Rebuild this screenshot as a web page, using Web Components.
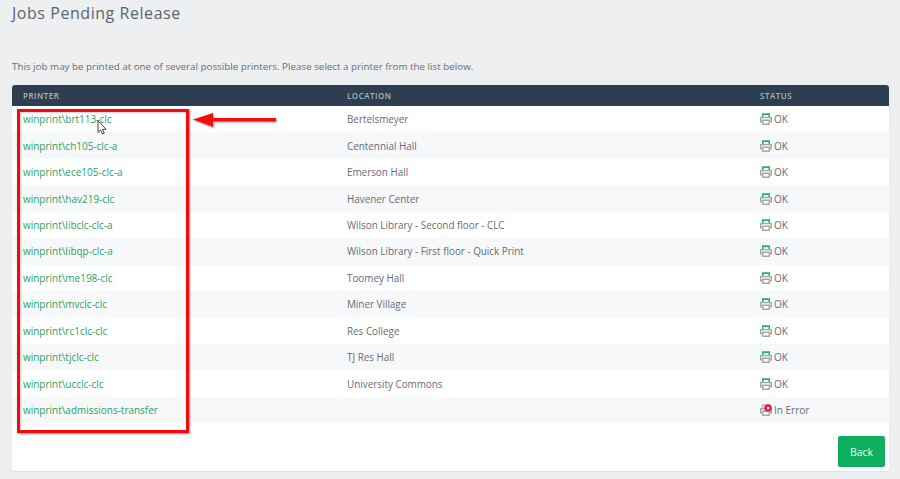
<!DOCTYPE html>
<html>
<head>
<meta charset="utf-8">
<title>Jobs Pending Release</title>
<style>
html, body { margin: 0; height: 100%; overflow: hidden; background: #eeeff1; }
body { font-family: "Open Sans", "Liberation Sans", sans-serif; color: #5f6670; }
</style>
</head>
<body>
<jobs-page>
  <span slot="title">Jobs Pending Release</span>
  <span slot="intro">This job may be printed at one of several possible printers. Please select a printer from the list below.</span>
  <printer-table>
    <printer-row name="winprint\brt113-clc" location="Bertelsmeyer"></printer-row>
    <printer-row name="winprint\ch105-clc-a" location="Centennial Hall"></printer-row>
    <printer-row name="winprint\ece105-clc-a" location="Emerson Hall"></printer-row>
    <printer-row name="winprint\hav219-clc" location="Havener Center"></printer-row>
    <printer-row name="winprint\libclc-clc-a" location="Wilson Library - Second floor - CLC"></printer-row>
    <printer-row name="winprint\libqp-clc-a" location="Wilson Library - First floor - Quick Print"></printer-row>
    <printer-row name="winprint\me198-clc" location="Toomey Hall"></printer-row>
    <printer-row name="winprint\mvclc-clc" location="Miner Village"></printer-row>
    <printer-row name="winprint\rc1clc-clc" location="Res College"></printer-row>
    <printer-row name="winprint\tjclc-clc" location="TJ Res Hall"></printer-row>
    <printer-row name="winprint\ucclc-clc" location="University Commons"></printer-row>
    <printer-row name="winprint\admissions-transfer" location="" error></printer-row>
  </printer-table>
  <back-button slot="actions">Back</back-button>
</jobs-page>
<callout-marks></callout-marks>

<script>
class JobsPage extends HTMLElement {
    constructor() {
        super();
        this.attachShadow({ mode: 'open' });
        this.shadowRoot.innerHTML = `
        <style>
        :host { display: block; padding: 0 11px 0 12px; }
        h1 {
            margin: 0;
            padding-top: 3px;
            height: 48px;
            font-size: 16px;
            line-height: 20px;
            font-weight: 400;
            letter-spacing: 0.55px;
            color: #5c6470;
        }
        p {
            margin: 0;
            height: 34px;
            padding-top: 8px;
            box-sizing: border-box;
            font-size: 9.82px;
            line-height: 16px;
            color: #666c75;
        }
        .panel {
            background: #fff;
            border-radius: 3px;
            box-shadow: 0 1px 1px rgba(0,0,0,.06);
        }
        .actions {
            display: flex;
            justify-content: flex-end;
            height: 48px;
            padding: 13px 4px 0 0;
            box-sizing: border-box;
        }
        </style>
        <h1><slot name="title"></slot></h1>
        <p><slot name="intro"></slot></p>
        <div class="panel">
            <slot></slot>
            <div class="actions"><slot name="actions"></slot></div>
        </div>
        `;
    }
}

class PrinterTable extends HTMLElement {
    constructor() {
        super();
        this.attachShadow({ mode: 'open' });
        this.shadowRoot.innerHTML = `
        <style>
        :host { display: block; }
        .head {
            display: grid;
            grid-template-columns: 324px 413px 1fr;
            height: 21px;
            align-items: center;
            background: #2c3e50;
            border-radius: 3px 3px 0 0;
            font-size: 8px;
            font-weight: 600;
            letter-spacing: 0.5px;
            color: #a9b4bf;
        }
        .head span { padding-left: 11px; }
        </style>
        <div class="head"><span>PRINTER</span><span>LOCATION</span><span>STATUS</span></div>
        <slot></slot>
        `;
    }
}

class PrinterRow extends HTMLElement {
    constructor() {
        super();
        this.attachShadow({ mode: 'open' });
        const error = this.hasAttribute('error');
        this.shadowRoot.innerHTML = `
        <style>
        :host { display: grid; grid-template-columns: 324px 413px 1fr; height: 26.45px; align-items: center; font-size: 9.87px; color: #666c75; }
        :host(:nth-child(even)) { background: #f7f8fa; }
        div { padding-left: 11px; white-space: nowrap; }
        a { color: #1fa463; text-decoration: none; font-size: 9.98px; }
        .status { display: flex; align-items: center; gap: 2px; font-size: 10px; }
        </style>
        <div><a href="#">${this.getAttribute('name')}</a></div>
        <div>${this.getAttribute('location')}</div>
        <div class="status"><printer-icon ${error ? 'error' : ''}></printer-icon><span>${error ? 'In Error' : 'OK'}</span></div>
        `;
    }
}

class PrinterIcon extends HTMLElement {
    constructor() {
        super();
        this.attachShadow({ mode: 'open' });
        const error = this.hasAttribute('error');
        const paper = error ? '#b9bcc0' : '#1fb866';
        const badge = error ? '<circle cx="8.7" cy="4.4" r="4.1" fill="#ee1c4e"/><rect x="7.5" y="3.2" width="2.4" height="2.4" fill="#fff"/>' : '';
        this.shadowRoot.innerHTML = `
        <style>
        :host { display: block; width: 12px; height: 12px; }
        svg { display: block; }
        </style>
        <svg width="12" height="12" viewBox="0 0 13 13">
            <path d="M3 4.5V1.2h7v3.3" fill="none" stroke="${paper}" stroke-width="1.7"/>
            <path d="M2.7 9.5H.8V5h11.4v4.5h-1.9" fill="none" stroke="#a3a7ab" stroke-width="1.6"/>
            <path d="M3 7.8h7v4.4H3z" fill="#fff" stroke="#a3a7ab" stroke-width="1.5"/>
            ${badge}
        </svg>
        `;
    }
}

class BackButton extends HTMLElement {
    constructor() {
        super();
        this.attachShadow({ mode: 'open' });
        this.shadowRoot.innerHTML = `
        <style>
        :host { display: block; }
        button {
            width: 47px;
            height: 31px;
            padding: 0;
            border: 0;
            border-radius: 2px;
            background: #0daf5f;
            color: #eafff3;
            font: 400 10.5px "Open Sans", "Liberation Sans", sans-serif;
        }
        </style>
        <button><slot></slot></button>
        `;
    }
}

// the red annotation sits on top of the screenshot
class CalloutMarks extends HTMLElement {
    constructor() {
        super();
        this.attachShadow({ mode: 'open' });
        this.shadowRoot.innerHTML = `
        <style>
        :host { display: block; position: absolute; left: 0; top: 0; width: 900px; height: 479px; pointer-events: none; }
        .box {
            position: absolute;
            left: 17px;
            top: 109px;
            width: 172px;
            height: 324px;
            box-sizing: border-box;
            border: 3px solid #f40a0c;
            box-shadow: 1px 1px 2px rgba(0,0,0,.45), inset 1px 1px 2px rgba(0,0,0,.2);
        }
        svg { position: absolute; left: 0; top: 0; }
        </style>
        <div class="box"></div>
        <svg width="900" height="479" viewBox="0 0 900 479">
            <defs><filter id="s" x="-10%" y="-30%" width="120%" height="170%"><feDropShadow dx="1" dy="1" stdDeviation="1" flood-opacity=".4"/></filter></defs>
            <path d="M193 119.5 L213 113 V118 H276 V121.5 H213 V127 Z" fill="#f00d10" filter="url(#s)"/>
            <path d="M98 120.5 V132.5 L100.6 130 L102.4 134 L104.2 133.2 L102.4 129.3 H106 Z" fill="#fff" stroke="#333" stroke-width=".9"/>
        </svg>
        `;
    }
}

customElements.define('jobs-page', JobsPage);
customElements.define('printer-table', PrinterTable);
customElements.define('printer-row', PrinterRow);
customElements.define('printer-icon', PrinterIcon);
customElements.define('back-button', BackButton);
customElements.define('callout-marks', CalloutMarks);
</script>
</body>
</html>
